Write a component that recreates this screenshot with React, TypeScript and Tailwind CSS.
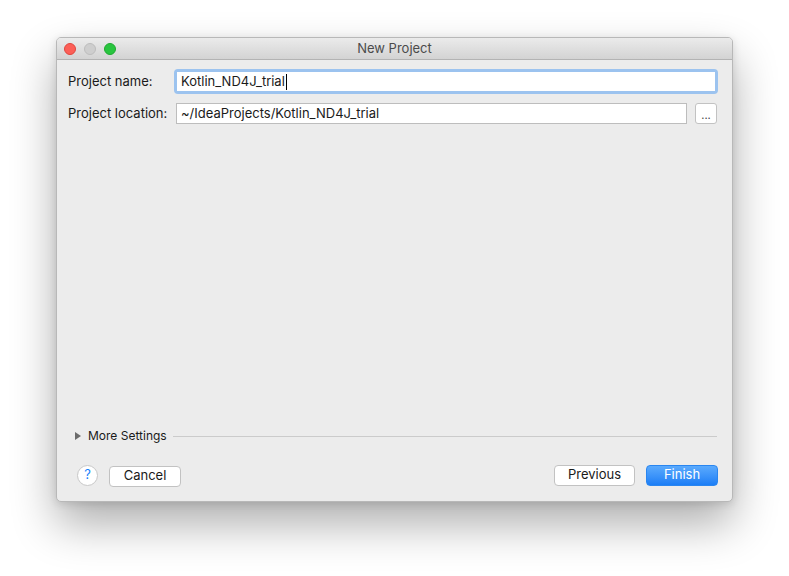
import React from "react";

export default function App() {
  const font = { fontFamily: 'Inter, "Liberation Sans", Arial, sans-serif' };
  return (
    <div className="w-[789px] h-[576px] bg-white pl-[56px] pt-[37px]" style={font}>
      <div className="w-[677px] h-[465px] rounded-[5px] border border-[#b8b8b8] bg-[#ececec] flex flex-col overflow-hidden shadow-[0_22px_45px_rgba(0,0,0,0.32),0_2px_8px_rgba(0,0,0,0.12)]">
        {/* title bar */}
        <div className="relative h-[22px] shrink-0 bg-gradient-to-b from-[#ebebeb] to-[#d3d3d3] border-b border-[#b3b3b3] flex items-center">
          <div className="flex items-center gap-[8px] pl-[7px]">
            <span className="w-[12px] h-[12px] rounded-full bg-[#fc5f57] border border-[#e0463e]" />
            <span className="w-[12px] h-[12px] rounded-full bg-[#cecece] border border-[#bdbdbd]" />
            <span className="w-[12px] h-[12px] rounded-full bg-[#29c53f] border border-[#1eaa30]" />
          </div>
          <div className="absolute inset-0 flex items-center justify-center text-[13px] text-[#4b4b4b]">
            New Project
          </div>
        </div>

        {/* body */}
        <div className="flex-1 flex flex-col pl-[11px] pr-[14px] pt-[9px] pb-[15px]">
          <div className="grid grid-cols-[106px_1fr] gap-y-[7px]">
            <div className="h-[25px] flex items-center text-[13px] text-[#1a1a1a]">Project name:</div>
            <div className="h-[25px] rounded-[4px] bg-[#9cc3ef] p-[3px]">
              <div className="h-full bg-white flex items-center pl-[4px] text-[13px] text-[#1a1a1a]">
                <span>Kotlin_ND4J_trial</span>
                <span className="w-[1px] h-[16px] bg-black ml-[1px]" />
              </div>
            </div>
            <div className="h-[25px] flex items-center text-[13px] text-[#1a1a1a]">Project location:</div>
            <div className="h-[25px] flex items-center gap-[8px] pl-[2px] pr-[1px]">
              <div className="flex-1 h-[21px] bg-white border border-[#bdbdbd] flex items-center pl-[4px] text-[13px] text-[#1a1a1a]">
                ~/IdeaProjects/Kotlin_ND4J_trial
              </div>
              <div className="w-[22px] h-[21px] bg-white border border-[#c2c2c2] rounded-[3px] flex items-center justify-center text-[11px] text-[#444] leading-none pt-[3px]">
                ...
              </div>
            </div>
          </div>

          <div className="flex-1" />

          <div className="h-[16px] flex items-center">
            <svg width="6" height="8" viewBox="0 0 6 8" className="ml-[7px]">
              <path d="M0 0 L6 4 L0 8 Z" fill="#6b6b6b" />
            </svg>
            <span className="ml-[7px] text-[12px] text-[#1a1a1a]">More Settings</span>
            <div className="flex-1 h-[1px] bg-[#cbcbcb] ml-[6px] mr-[1px]" />
          </div>

          <div className="mt-[20px] h-[22px] flex items-center">
            <div className="ml-[9px] w-[21px] h-[21px] rounded-full bg-white border border-[#c8c8c8] flex items-center justify-center text-[13px] text-[#1a82fb]">
              ?
            </div>
            <div className="ml-[11px] w-[72px] h-[21px] bg-white border border-[#c2c2c2] rounded-[4px] flex items-center justify-center text-[13px] text-[#1a1a1a] mt-[2px]">
              Cancel
            </div>
            <div className="flex-1" />
            <div className="w-[81px] h-[21px] bg-white border border-[#c2c2c2] rounded-[4px] flex items-center justify-center text-[13px] text-[#1a1a1a]">
              Previous
            </div>
            <div className="ml-[11px] w-[72px] h-[21px] rounded-[4px] bg-gradient-to-b from-[#5aaafd] to-[#1b7ef6] border border-[#2a86f0] flex items-center justify-center text-[13px] text-white">
              Finish
            </div>
          </div>
        </div>
      </div>
    </div>
  );
}
